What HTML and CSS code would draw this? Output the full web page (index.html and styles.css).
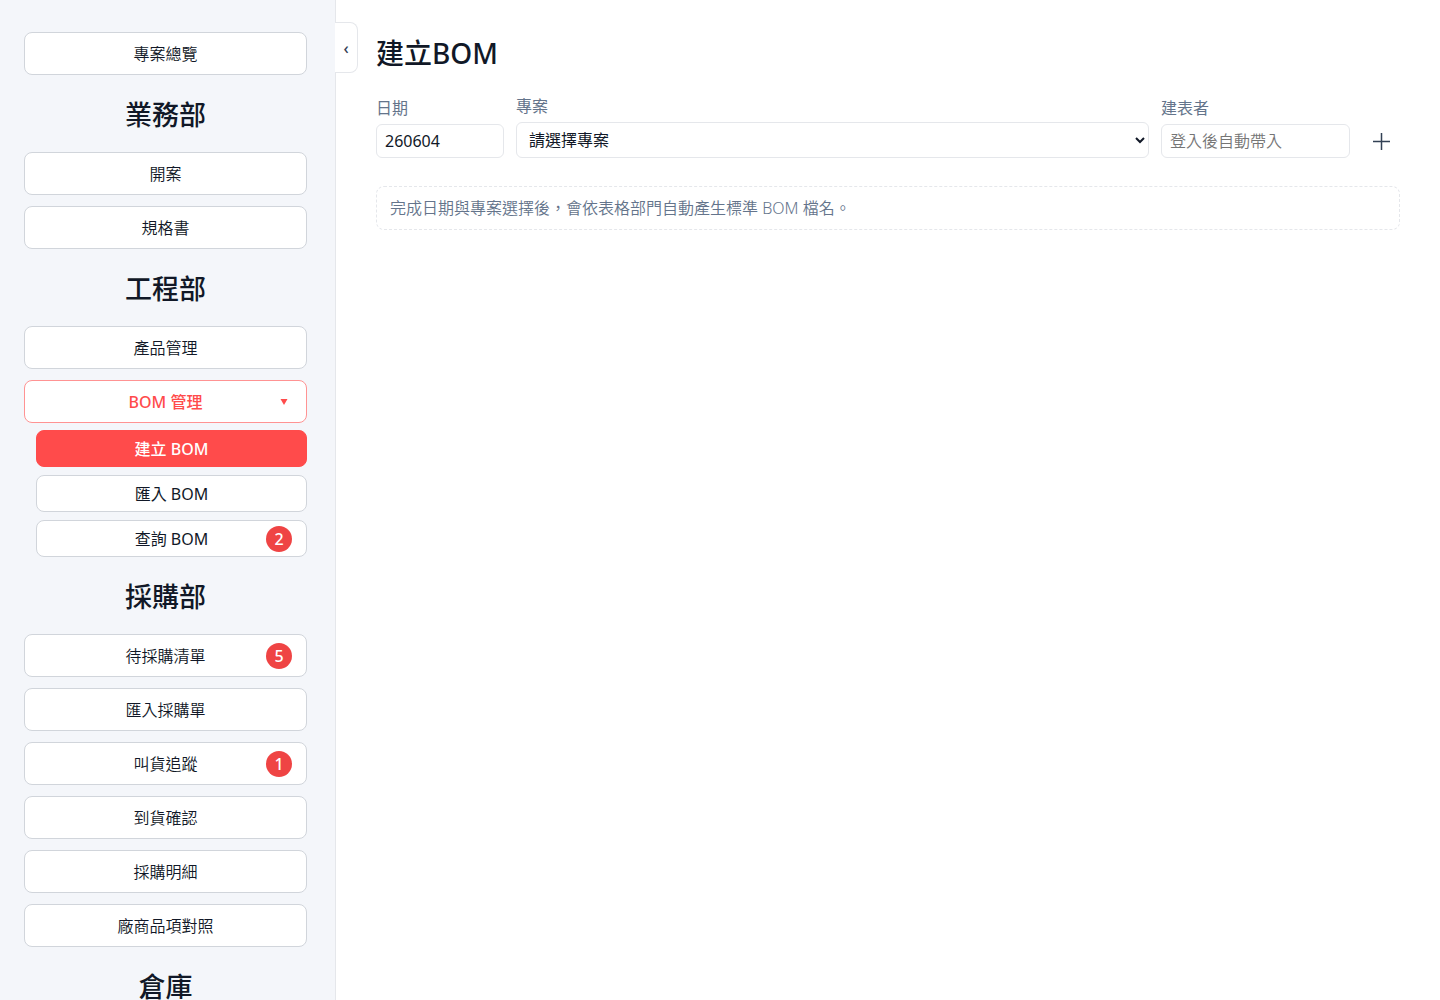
FILE: index.html
```html
<!DOCTYPE html>
<html lang="zh-Hant">
  <head>
    <meta charset="UTF-8" />
    <meta name="viewport" content="width=device-width, initial-scale=1.0" />
    <title>建立BOM</title>
    <link rel="stylesheet" href="styles.css">
  </head>
  <body>
    <div class="layout">
      <nav class="sidebar">
        <button type="button" class="nav-btn">專案總覽</button>

        <h2>業務部</h2>
        <div class="nav-group">
          <button type="button" class="nav-btn">開案</button>
          <button type="button" class="nav-btn">規格書</button>
        </div>

        <h2>工程部</h2>
        <div class="nav-group">
          <button type="button" class="nav-btn">產品管理</button>
          <button type="button" class="nav-btn open" aria-expanded="true">
            BOM 管理
            <svg class="caret" viewBox="0 0 8 6" aria-hidden="true"><path d="M0.5 0h7L4 6z" /></svg>
          </button>
        </div>
        <div class="sub-nav">
          <button type="button" class="nav-btn active">建立 BOM</button>
          <button type="button" class="nav-btn">匯入 BOM</button>
          <button type="button" class="nav-btn">查詢 BOM<span class="badge">2</span></button>
        </div>

        <h2>採購部</h2>
        <div class="nav-group">
          <button type="button" class="nav-btn">待採購清單<span class="badge">5</span></button>
          <button type="button" class="nav-btn">匯入採購單</button>
          <button type="button" class="nav-btn">叫貨追蹤<span class="badge">1</span></button>
          <button type="button" class="nav-btn">到貨確認</button>
          <button type="button" class="nav-btn">採購明細</button>
          <button type="button" class="nav-btn">廠商品項對照</button>
        </div>

        <h2>倉庫</h2>
      </nav>

      <main class="content">
        <button type="button" class="toggle" aria-label="收合選單">‹</button>
        <h1>建立BOM</h1>

        <form class="bom-form">
          <div class="field">
            <label for="bomDate">日期</label>
            <input type="text" id="bomDate" value="260604" />
          </div>
          <div class="field">
            <label for="bomProject">專案</label>
            <select id="bomProject">
              <option>請選擇專案</option>
            </select>
          </div>
          <div class="field">
            <label for="bomAuthor">建表者</label>
            <input type="text" id="bomAuthor" placeholder="登入後自動帶入" />
          </div>
          <button type="button" class="add-btn" aria-label="新增">
            <svg viewBox="0 0 18 18" aria-hidden="true"><path d="M9.5 1v17M1 9.5h17" /></svg>
          </button>
        </form>

        <p class="hint">完成日期與專案選擇後，會依表格部門自動產生標準 BOM 檔名。</p>
      </main>
    </div>
  </body>
</html>
```
FILE: styles.css
```css
* {
  box-sizing: border-box;
}
body {
  margin: 0;
  background: #fff;
  color: #111827;
  font-family: "Noto Sans", "Noto Sans CJK TC", sans-serif;
  font-size: 16px;
  font-weight: 350;
  line-height: 24px;
}
button,
input,
select {
  font: inherit;
  color: inherit;
}
button {
  cursor: pointer;
}
.layout {
  display: flex;
  height: 100vh;
}

/* sidebar */
.sidebar {
  width: 336px;
  flex-shrink: 0;
  padding: 32px 28px 32px 24px;
  background: #f4f6fa;
  border-right: 1px solid #e5e7eb;
  overflow-y: auto;
  scrollbar-width: none;
}
.sidebar h2 {
  margin: 0;
  padding: 22px 0 19px;
  font-size: 27px;
  font-weight: 500;
  line-height: 36px;
  text-align: center;
}
.nav-group {
  display: flex;
  flex-direction: column;
  gap: 11px;
}
.nav-btn {
  position: relative;
  display: block;
  width: 100%;
  height: 43px;
  padding: 0 12px;
  background: #fff;
  border: 1px solid #d1d5db;
  border-radius: 8px;
  text-align: center;
}
.nav-btn:hover {
  border-color: #ff4b4b;
}
.nav-btn.open {
  border-color: #ff9393;
  color: #ff4b4b;
  font-weight: 500;
}
.nav-btn.active {
  background: #ff4b4b;
  border-color: #ff4b4b;
  color: #fff;
  font-weight: 500;
}
.sub-nav {
  display: flex;
  flex-direction: column;
  gap: 8px;
  margin-top: 7px;
  padding-left: 12px;
  font-weight: 400;
}
.sub-nav .nav-btn {
  height: 37px;
}
.caret {
  position: absolute;
  top: 18px;
  right: 18px;
  width: 8px;
  height: 6px;
  fill: #ff4b4b;
}
.badge {
  position: absolute;
  top: 50%;
  right: 14px;
  width: 26px;
  height: 26px;
  margin-top: -13px;
  border-radius: 13px;
  background: #ef4444;
  color: #fff;
  font-weight: 500;
  line-height: 26px;
}

/* main area */
.content {
  position: relative;
  flex: 1;
  min-width: 0;
  padding: 33px 40px;
}
.toggle {
  position: absolute;
  top: 22px;
  left: -1px;
  width: 23px;
  height: 51px;
  padding: 0;
  background: #fff;
  border: 1px solid #e5e7eb;
  border-left: none;
  border-radius: 0 8px 8px 0;
  color: #334155;
  font-weight: 500;
}
h1 {
  margin: 0 0 21px;
  font-size: 28px;
  font-weight: 500;
  line-height: 40px;
}
.bom-form {
  display: grid;
  grid-template-columns: 128px minmax(0, 1fr) 189px 38px;
  gap: 12px;
  align-items: end;
}
.field {
  display: flex;
  flex-direction: column;
  gap: 4px;
}
.field label {
  color: #64748b;
  font-weight: 400;
}
.field input,
.field select {
  width: 100%;
  height: 34px;
  padding: 0 8px;
  background: #fff;
  border: 1px solid #e5e7eb;
  border-radius: 6px;
  font-weight: 400;
}
.field select {
  height: 36px;
  padding: 0 0 0 8px;
}
.field input::placeholder {
  color: #757575;
  font-weight: 350;
}
.add-btn {
  display: flex;
  align-items: center;
  justify-content: center;
  height: 34px;
  padding: 0;
  background: none;
  border: none;
}
.add-btn svg {
  width: 18px;
  height: 18px;
  stroke: #334155;
  stroke-width: 1.5;
}
.hint {
  margin: 28px 0 0;
  padding: 9px 13px;
  border: 1px dashed #e5e7eb;
  border-radius: 8px;
  color: #64748b;
}
```
